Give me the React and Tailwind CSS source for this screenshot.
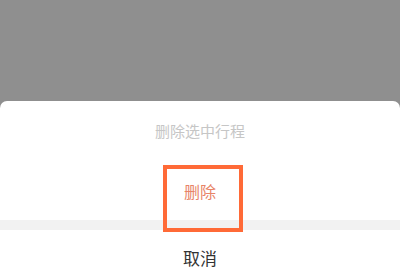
export default function App() {
  const font = { fontFamily: '"Noto Sans CJK SC", "Noto Sans", sans-serif' };
  return (
    <div className="relative w-[400px] h-[275px] overflow-hidden bg-[#8f8f8f] flex flex-col" style={font}>
      <div className="h-[101px] shrink-0" />
      <div className="flex-1 bg-white rounded-t-[7px] flex flex-col">
        <div className="h-[60px] flex items-center justify-center text-[15px] text-[#c6c6c6]">
          删除选中行程
        </div>
        <div className="h-[59px] flex items-center justify-center text-[16px] text-[#e88467]">
          删除
        </div>
        <div className="h-[10px] bg-[#f2f2f2]" />
        <div className="h-[56px] flex items-center justify-center text-[17px] text-[#333333]">
          取消
        </div>
      </div>
      {/* highlight annotation */}
      <div className="absolute left-[163px] top-[165px] w-[80px] h-[67px] border-4 border-[#ff6a37]" />
    </div>
  );
}
